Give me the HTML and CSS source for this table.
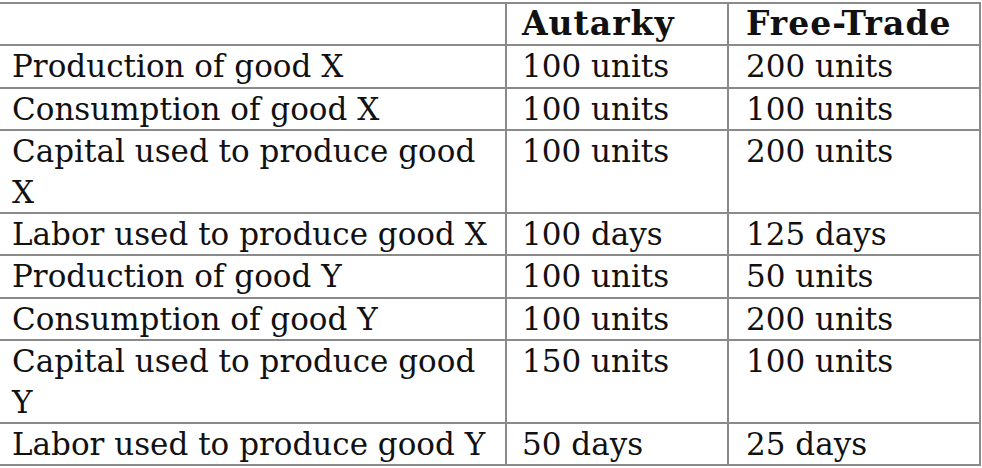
FILE: index.html
```html
<!DOCTYPE html>
<html lang="en">
<head>
<meta charset="utf-8">
<title>Autarky vs Free-Trade</title>
<link rel="stylesheet" href="styles.css">
</head>
<body>
<table class="grid">
  <colgroup>
    <col class="c-label">
    <col class="c-aut">
    <col class="c-free">
  </colgroup>
  <thead>
    <tr>
      <th class="label"></th>
      <th class="aut">Autarky</th>
      <th class="free">Free-Trade</th>
    </tr>
  </thead>
  <tbody>
    <tr><td class="label">Production of good X</td><td class="aut">100 units</td><td class="free">200 units</td></tr>
    <tr><td class="label">Consumption of good X</td><td class="aut">100 units</td><td class="free">100 units</td></tr>
    <tr><td class="label">Capital used to produce good X</td><td class="aut">100 units</td><td class="free">200 units</td></tr>
    <tr><td class="label">Labor used to produce good X</td><td class="aut">100 days</td><td class="free">125 days</td></tr>
    <tr><td class="label">Production of good Y</td><td class="aut">100 units</td><td class="free">50 units</td></tr>
    <tr><td class="label">Consumption of good Y</td><td class="aut">100 units</td><td class="free">200 units</td></tr>
    <tr><td class="label">Capital used to produce good Y</td><td class="aut">150 units</td><td class="free">100 units</td></tr>
    <tr><td class="label">Labor used to produce good Y</td><td class="aut">50 days</td><td class="free">25 days</td></tr>
  </tbody>
</table>
</body>
</html>
```

FILE: styles.css
```css
html, body {
  margin: 0;
  padding: 0;
  background: #ffffff;
}

body {
  padding-top: 2px;
  font-family: "DejaVu Serif", "Liberation Serif", serif;
  color: #111111;
}

.grid {
  border-collapse: collapse;
  table-layout: fixed;
  width: 981px;
  margin-left: -2px;
}

.c-label { width: 507px; }
.c-aut { width: 222px; }
.c-free { width: 252px; }

.grid th,
.grid td {
  border: 2px solid #8a8a8a;
  font-size: 31px;
  line-height: 40.4px;
  vertical-align: top;
  text-align: left;
  padding: 0;
}

.grid th {
  font-weight: bold;
  font-size: 33px;
  letter-spacing: 1px;
}

.grid .label { padding-left: 12px; padding-right: 6px; }
.grid .aut { padding-left: 15px; }
.grid .free { padding-left: 17px; }
```
